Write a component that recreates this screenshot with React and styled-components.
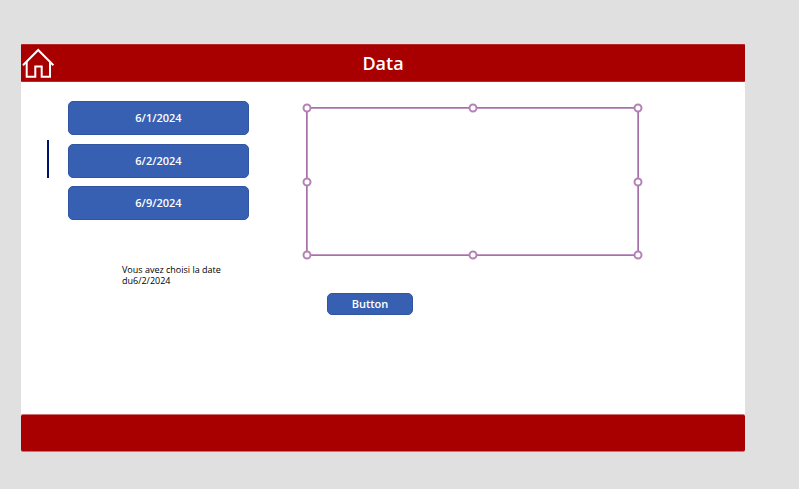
import React, { useState } from "react";
import styled, { createGlobalStyle } from "styled-components";

const GlobalStyle = createGlobalStyle`
  *, *::before, *::after { box-sizing: border-box; }
  body {
    margin: 0;
    background: #e0e0e0;
    font-family: "Open Sans", "Noto Sans", sans-serif;
  }
`;

const Workspace = styled.div`
  padding: 44px 54px 37px 21px;
`;

const Screen = styled.div`
  background: #fff;
`;

const Header = styled.header`
  display: grid;
  grid-template-columns: 34px 1fr 34px;
  align-items: center;
  height: 38px;
  border: solid #b62a2a;
  border-width: 1px 0;
  border-radius: 1px;
  background: #a80000;
  color: #fff;
`;

const Title = styled.h1`
  margin: 0;
  font-size: 18px;
  font-weight: 600;
  line-height: 24px;
  text-align: center;
`;

const HomeButton = styled.button`
  display: block;
  height: 34px;
  padding: 0;
  border: 0;
  background: none;
  color: inherit;
  cursor: pointer;

  svg { display: block; }
`;

const Content = styled.main`
  display: grid;
  grid-template-columns: minmax(0, 202fr) minmax(0, 333fr);
  column-gap: 57px;
  align-items: start;
  min-height: 332px;
  padding: 15px 106px 15px 26px;
`;

const Gallery = styled.ul`
  display: flex;
  flex-direction: column;
  justify-content: space-between;
  height: 123px;
  margin: 0;
  padding: 0;
  list-style: none;
`;

const GalleryRow = styled.li`
  display: grid;
  grid-template-columns: 2px 1fr;
  column-gap: 19px;
  height: 38px;
`;

const Marker = styled.span`
  background: ${(p) => (p.$active ? "#00126b" : "transparent")};
`;

const Button = styled.button`
  align-self: end;
  width: ${(p) => (p.$compact ? "86px" : "100%")};
  height: ${(p) => (p.$compact ? "22px" : "34px")};
  padding: 0;
  border: 1px solid #3155a0;
  border-radius: 5px;
  background: #3860b2;
  color: #fff;
  font: 600 11px/16px "Open Sans", "Noto Sans", sans-serif;
  cursor: pointer;
`;

const Message = styled.p`
  width: 112px;
  margin: 44px 0 0 75px;
  color: #000;
  font-size: 9px;
  line-height: 11px;
`;

const Details = styled.section`
  display: flex;
  flex-direction: column;
  gap: 37px;
  padding-top: 10px;
`;

const Selection = styled.div`
  position: relative;
  height: 149px;
  border: 1px solid #a670a8;
  box-shadow: inset 0 0 0 1px #c096c2;
`;

const Handle = styled.span`
  position: absolute;
  left: ${(p) => p.$x};
  top: ${(p) => p.$y};
  width: 9px;
  height: 9px;
  border: 2px solid #b482b5;
  border-radius: 50%;
  background: #fff;
  transform: translate(-50%, -50%);
`;

const Actions = styled.div`
  display: flex;
  padding-left: 21px;
`;

const Footer = styled.footer`
  height: 38px;
  border: solid #cf7070;
  border-width: 1px 0;
  border-radius: 2px;
  background: #a80000;
`;

const dates = ["6/1/2024", "6/2/2024", "6/9/2024"];

const handles = [
  ["0%", "0%"],
  ["50%", "0%"],
  ["100%", "0%"],
  ["0%", "50%"],
  ["100%", "50%"],
  ["0%", "100%"],
  ["50%", "100%"],
  ["100%", "100%"],
];

function HomeIcon() {
  return (
    <svg width="34" height="34" viewBox="0 0 34 34" fill="none" stroke="currentColor" strokeWidth="2" aria-hidden="true">
      <path d="M2 19.2 17.2 4l15.2 15.2" />
      <path d="M5.7 16v14.8h8.6V20.4h6.4v10.4H29V16" />
    </svg>
  );
}

export default function App() {
  const [selected, setSelected] = useState("6/2/2024");

  return (
    <Workspace>
      <GlobalStyle />
      <Screen>
        <Header>
          <HomeButton type="button" aria-label="Home">
            <HomeIcon />
          </HomeButton>
          <Title>Data</Title>
        </Header>
        <Content>
          <section>
            <Gallery>
              {dates.map((date) => (
                <GalleryRow key={date}>
                  <Marker $active={date === selected} />
                  <Button type="button" onClick={() => setSelected(date)}>
                    {date}
                  </Button>
                </GalleryRow>
              ))}
            </Gallery>
            <Message>{`Vous avez choisi la date du${selected}`}</Message>
          </section>
          <Details>
            <Selection>
              {handles.map(([x, y]) => (
                <Handle key={x + y} $x={x} $y={y} />
              ))}
            </Selection>
            <Actions>
              <Button type="button" $compact>
                Button
              </Button>
            </Actions>
          </Details>
        </Content>
        <Footer />
      </Screen>
    </Workspace>
  );
}
